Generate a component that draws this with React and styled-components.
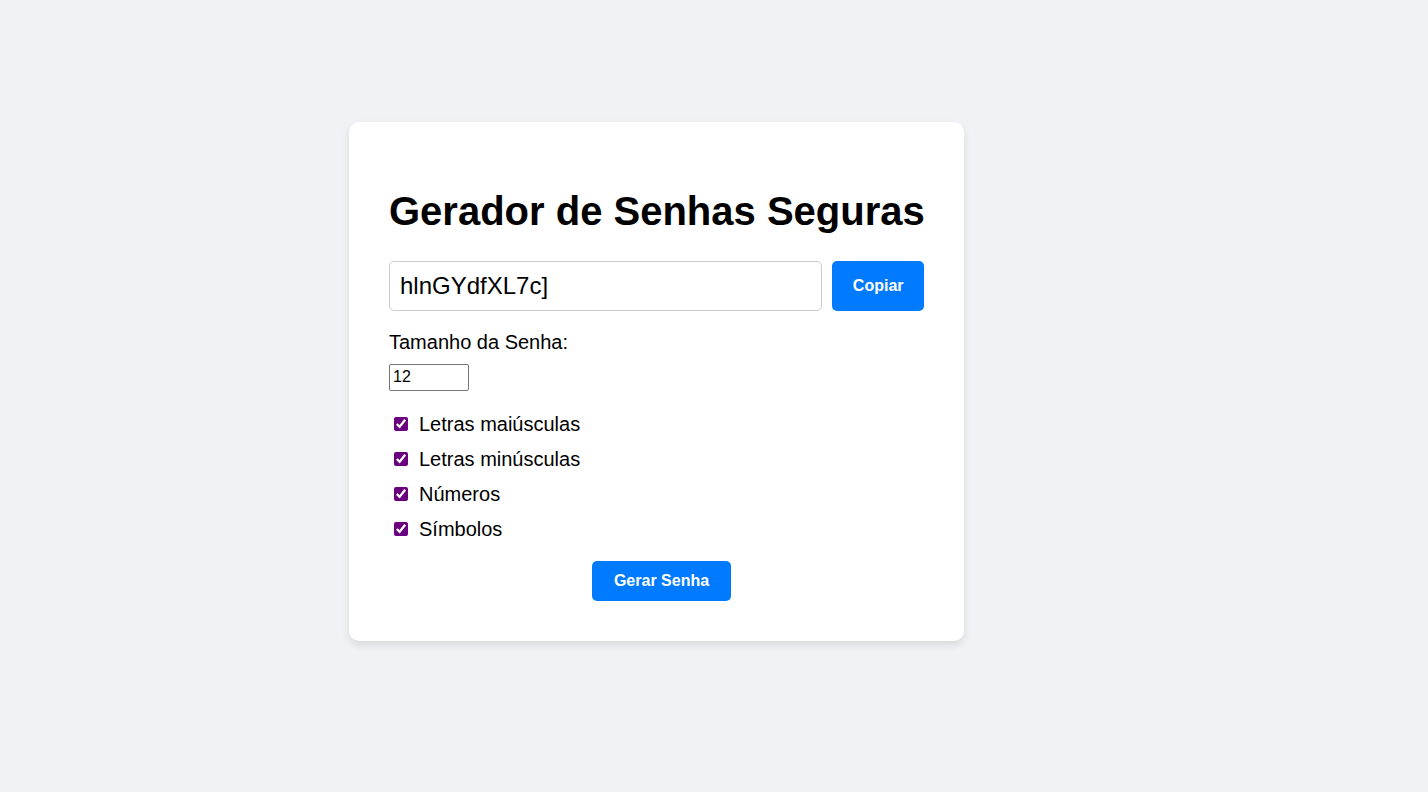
import React, { useState } from 'react';
import styled, { createGlobalStyle } from 'styled-components';

const GlobalStyle = createGlobalStyle`
  body {
    margin: 0;
    background-color: #f0f2f5;
    font-family: "Liberation Sans", Arial, sans-serif;
  }
`;

const Page = styled.div`
  min-height: 792px;
  box-sizing: border-box;
  padding: 122px 0 0 349px;
`;

const Card = styled.div`
  width: 615px;
  box-sizing: border-box;
  background-color: #fff;
  border-radius: 10px;
  padding: 40px;
  box-shadow: 0 4px 8px rgba(0, 0, 0, 0.1);
`;

const Title = styled.h1`
  font-size: 40px;
  font-weight: bold;
  margin: 0.67em 0;
  white-space: nowrap;
  color: #000;
`;

const PasswordRow = styled.div`
  display: flex;
  align-items: stretch;
`;

const PasswordInput = styled.input`
  flex: 1;
  min-width: 0;
  font-family: inherit;
  font-size: 24px;
  padding: 10px;
  border: 1px solid #ccc;
  border-radius: 5px;
  color: #000;
  outline: none;
`;

const Button = styled.button`
  margin-left: 10px;
  padding: ${(p) => (p.$large ? '11px 22px' : '10px 20.5px')};
  font-family: inherit;
  font-size: 16px;
  font-weight: bold;
  color: #fff;
  background-color: #007bff;
  border: none;
  border-radius: 5px;
  cursor: pointer;
`;

const Field = styled.div`
  margin: 20px 0 22px;
`;

const Label = styled.label`
  display: block;
  font-size: 20px;
  color: #000;
  margin-bottom: 10px;
`;

const LengthInput = styled.input`
  width: 80px;
  height: 27px;
  box-sizing: border-box;
  font-family: inherit;
  font-size: 16px;
  padding: 0 3px;
  border: 1px solid #767676;
  border-radius: 2px;
`;

const Options = styled.div`
  display: flex;
  flex-direction: column;
  gap: 12px;
`;

const Option = styled.label`
  display: flex;
  align-items: center;
  font-size: 20px;
  line-height: 23px;
  color: #000;
`;

const Check = styled.input`
  width: 14px;
  height: 14px;
  margin: 0 11px 0 5px;
  accent-color: #6a0080;
`;

const Actions = styled.div`
  margin-top: 20px;
  text-align: center;
  line-height: 0;
`;

const options = [
  'Letras maiúsculas',
  'Letras minúsculas',
  'Números',
  'Símbolos',
];

export default function App() {
  const [password] = useState('hlnGYdfXL7c]');
  const [length, setLength] = useState(12);

  return (
    <>
      <GlobalStyle />
      <Page>
        <Card>
          <Title>Gerador de Senhas Seguras</Title>
          <PasswordRow>
            <PasswordInput type="text" value={password} readOnly />
            <Button>Copiar</Button>
          </PasswordRow>
          <Field>
            <Label htmlFor="length">Tamanho da Senha:</Label>
            <LengthInput
              id="length"
              type="text"
              value={length}
              onChange={(e) => setLength(e.target.value)}
            />
          </Field>
          <Options>
            {options.map((o) => (
              <Option key={o}>
                <Check type="checkbox" defaultChecked />
                {o}
              </Option>
            ))}
          </Options>
          <Actions>
            <Button $large>Gerar Senha</Button>
          </Actions>
        </Card>
      </Page>
    </>
  );
}
